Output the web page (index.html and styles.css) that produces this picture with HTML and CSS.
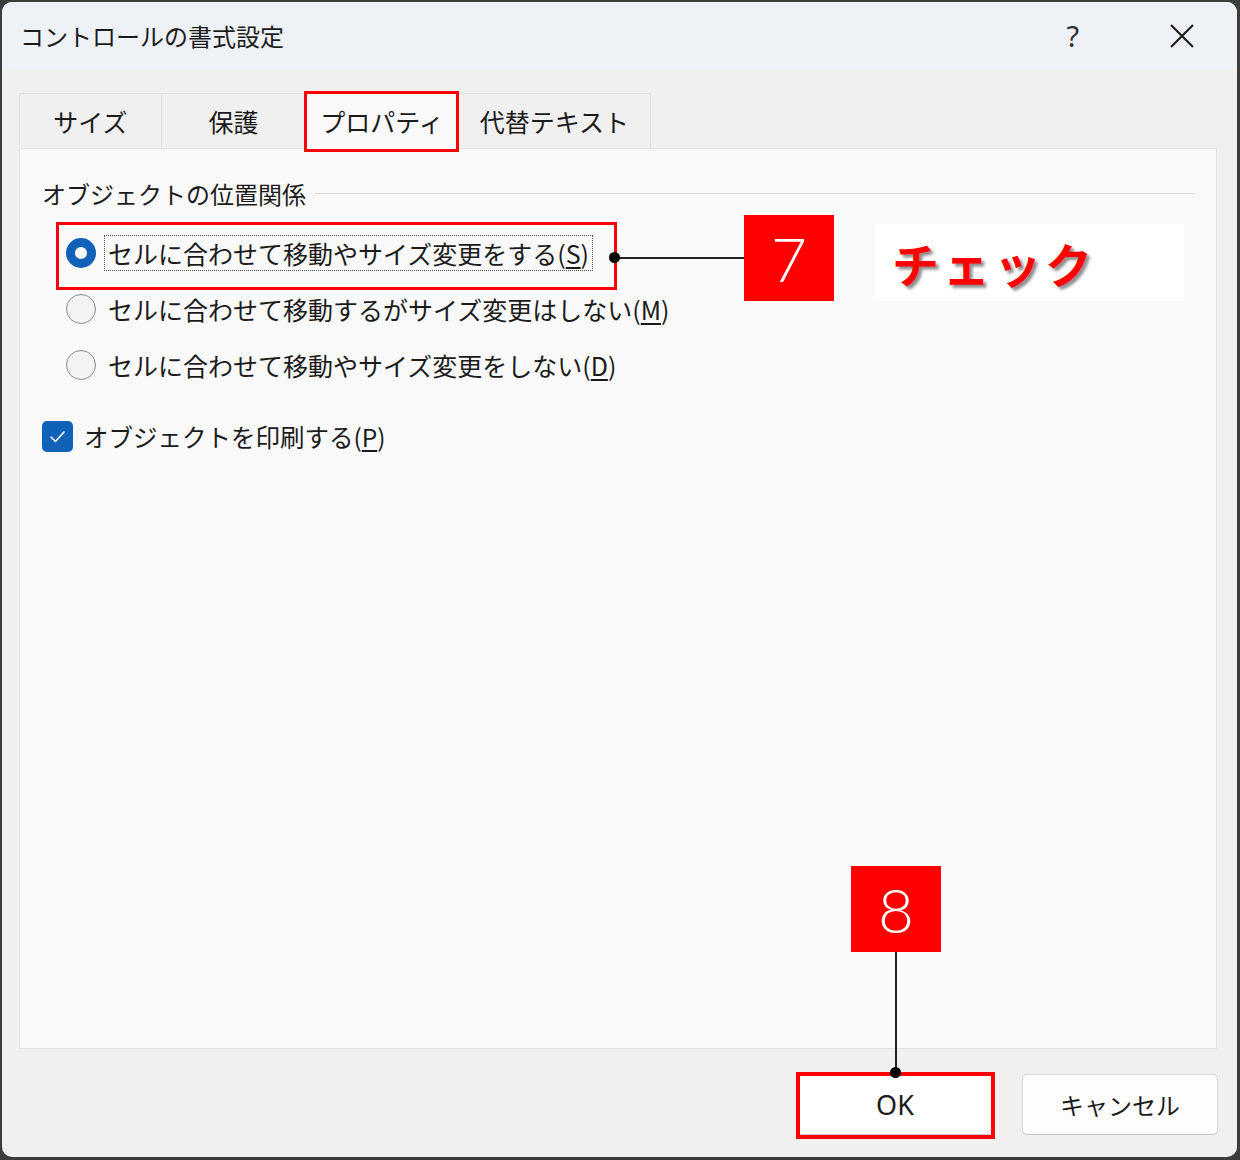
FILE: index.html
```html
<!DOCTYPE html>
<html lang="ja">
<head>
<meta charset="utf-8">
<title>コントロールの書式設定</title>
<link rel="stylesheet" href="styles.css">
</head>
<body>
<div class="window">
  <div class="titlebar">
    <span class="title">コントロールの書式設定</span>
    <div class="tb-btns">
      <span class="help">?</span>
      <svg class="close" width="26" height="26" viewBox="0 0 26 26"><path d="M2 2 L24 24 M24 2 L2 24" stroke="#1f1f1f" stroke-width="2.2" fill="none"/></svg>
    </div>
  </div>
  <div class="body">
    <div class="tabs">
      <div class="tab t1">サイズ</div>
      <div class="tab t2">保護</div>
      <div class="tab t3 active">プロパティ</div>
      <div class="tab t4">代替テキスト</div>
    </div>
    <div class="panel">
      <div class="group-head"><span>オブジェクトの位置関係</span><span class="rule"></span></div>
      <div class="radios">
        <div class="radio-row"><span class="radio on"></span><span class="lbl focus">セルに合わせて移動やサイズ変更をする(<u>S</u>)</span></div>
        <div class="radio-row"><span class="radio"></span><span class="lbl">セルに合わせて移動するがサイズ変更はしない(<u>M</u>)</span></div>
        <div class="radio-row"><span class="radio"></span><span class="lbl">セルに合わせて移動やサイズ変更をしない(<u>D</u>)</span></div>
      </div>
      <div class="check-row">
        <span class="checkbox"><svg width="31" height="31" viewBox="0 0 31 31"><path d="M9 16 L13.5 20.5 L22 11" stroke="#ffffff" stroke-width="1.6" fill="none" stroke-linecap="round" stroke-linejoin="round"/></svg></span>
        <span class="clbl">オブジェクトを印刷する(<u>P</u>)</span>
      </div>
    </div>
    <div class="buttons">
      <button class="btn ok">OK</button>
      <button class="btn">キャンセル</button>
    </div>
  </div>
</div>

<div class="mark mk-tab"></div>
<div class="mark mk-radio"></div>
<div class="mark mk-ok"></div>
<div class="conn-h"></div>
<div class="dot d1"></div>
<div class="num n7">7</div>
<div class="callout">チェック</div>
<div class="num n8">8</div>
<div class="conn-v"></div>
<div class="dot d2"></div>
</body>
</html>
```
FILE: styles.css
```css
* { box-sizing: border-box; }
html, body { margin: 0; padding: 0; }
body {
  width: 1240px;
  height: 1160px;
  overflow: hidden;
  background: #3c3c3c;
  font-family: "Noto Sans CJK JP", "Noto Sans", sans-serif;
  color: #1b1b1b;
  position: relative;
}
.window {
  margin: 2px;
  width: 1235px;
  height: 1155px;
  border-radius: 10px;
  background: #f0f0f0;
  overflow: hidden;
  display: flex;
  flex-direction: column;
}
.titlebar {
  height: 68px;
  flex: none;
  background: #eef1f6;
  display: flex;
  align-items: center;
  justify-content: space-between;
  padding: 0 42px 0 18px;
}
.title { font-size: 24px; line-height: 30px; }
.tb-btns { display: flex; align-items: center; gap: 90px; }
.help {
  font-family: "Noto Sans", sans-serif;
  font-size: 29px;
  color: #303030;
  line-height: 30px;
}
.close { display: block; }

.body {
  flex: 1;
  display: flex;
  flex-direction: column;
  padding: 23px 20px 0 17px;
}
.tabs { display: flex; height: 55px; align-items: flex-end; flex: none; }
.tab {
  height: 55px;
  border: 1px solid #e2e2e2;
  border-bottom: none;
  background: #f0f0f0;
  font-size: 25px;
  display: flex;
  align-items: center;
  justify-content: center;
  margin-right: -1px;
}
.t1 { width: 143px; }
.t2 { width: 145px; }
.t3 { width: 154px; }
.t4 { width: 193px; }
.tab.active {
  height: 58px;
  background: #f9f9f9;
  margin-bottom: -1px;
  position: relative;
}

.panel {
  width: 1198px;
  height: 901px;
  flex: none;
  background: #f9f9f9;
  border: 1px solid #e3e3e3;
  padding: 29px 21px 0 22px;
}
.group-head {
  display: flex;
  align-items: center;
  height: 30px;
  font-size: 24px;
}
.rule { flex: 1; height: 1px; background: #d9d9d9; margin-left: 9px; }
.radios { margin-top: 17px; padding-left: 24px; }
.radio-row {
  display: flex;
  align-items: center;
  height: 56px;
  font-size: 25px;
}
.radio {
  flex: none;
  width: 30px;
  height: 30px;
  border-radius: 50%;
  border: 1.5px solid #8a8a8a;
  background: #f3f3f3;
  position: relative;
}
.radio.on { background: #0f62b8; border: none; }
.radio.on::after {
  content: "";
  position: absolute;
  left: 9px;
  top: 9px;
  width: 12px;
  height: 12px;
  border-radius: 50%;
  background: #ffffff;
}
.lbl {
  margin-left: 8px;
  padding: 0 3px;
  height: 36px;
  line-height: 34px;
  border: 1px dotted transparent;
  white-space: nowrap;
}
.lbl.focus { border-color: #505050; }
u { text-decoration-thickness: 1.5px; text-underline-offset: 3px; }
.check-row {
  margin-top: 15px;
  height: 56px;
  display: flex;
  align-items: center;
  font-size: 24.5px;
}
.checkbox {
  flex: none;
  width: 31px;
  height: 31px;
  border-radius: 5px;
  background: #0f62b8;
  margin-right: 11px;
}
.checkbox svg { display: block; }
.clbl { white-space: nowrap; }

.buttons {
  display: flex;
  justify-content: flex-end;
  gap: 29px;
  padding-top: 25px;
  margin-right: -1px;
}
.btn {
  width: 196px;
  height: 61px;
  background: #fdfdfd;
  border: 1px solid #d8d8d8;
  border-bottom-color: #c6c6c6;
  border-radius: 5px;
  font-family: "Noto Sans CJK JP", "Noto Sans", sans-serif;
  font-size: 24px;
  color: #1b1b1b;
  padding: 0;
}
.btn.ok { font-family: "Noto Sans", sans-serif; font-size: 27px; background: #ffffff; }

/* annotations */
.mark { position: absolute; z-index: 5; border: 3.5px solid #ff0000; }
.mk-tab { left: 304px; top: 91px; width: 155px; height: 61px; }
.mk-radio { left: 56px; top: 222px; width: 561px; height: 68px; }
.mk-ok { left: 796px; top: 1072px; width: 199px; height: 67px; border-width: 4px; }
.conn-h { position: absolute; z-index: 5; left: 614px; top: 257px; width: 130px; height: 1.5px; background: #222; }
.conn-v { position: absolute; z-index: 5; left: 895px; top: 952px; width: 1.5px; height: 121px; background: #222; }
.dot { position: absolute; z-index: 6; width: 11px; height: 11px; border-radius: 50%; background: #000; }
.d1 { left: 609px; top: 252px; }
.d2 { left: 890px; top: 1067px; }
.num {
  position: absolute;
  z-index: 5;
  width: 90px;
  height: 86px;
  background: #ff0000;
  color: #ffffff;
  font-family: "Lato", "Noto Sans", sans-serif;
  font-weight: 300;
  font-size: 62px;
  display: flex;
  align-items: center;
  justify-content: center;
}
.n7 { left: 744px; top: 215px; }
.n8 { left: 851px; top: 866px; }
.callout {
  position: absolute;
  z-index: 5;
  left: 874px;
  top: 224px;
  width: 310px;
  height: 77px;
  background: #ffffff;
  color: #ff0000;
  font-family: "Noto Sans CJK JP", sans-serif;
  font-weight: 700;
  font-size: 47px;
  letter-spacing: 4px;
  line-height: 77px;
  padding-left: 18px;
  text-shadow: 3px 3px 3px rgba(0, 0, 0, 0.45);
}
```
